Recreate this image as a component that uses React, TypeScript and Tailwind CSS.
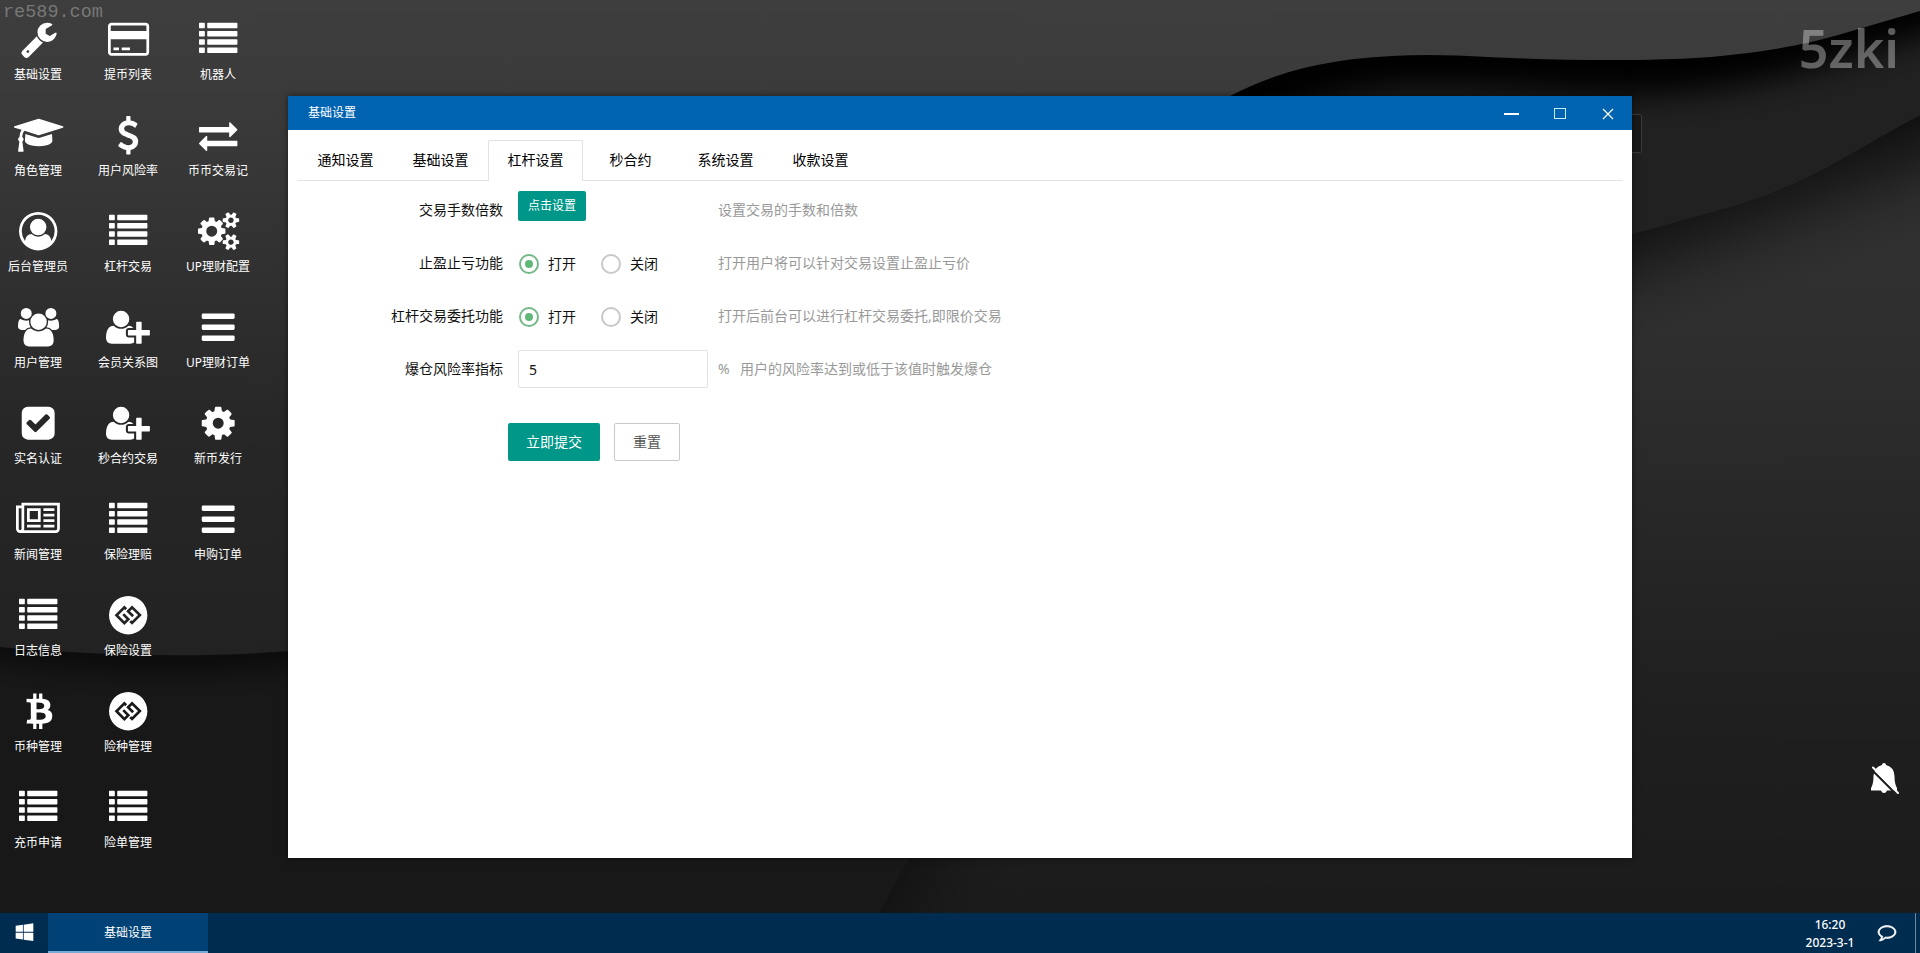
import { useState } from 'react';

type IconDef = { w: number; d: string };

const icons: Record<string, IconDef> = {
  wrench: {
    w: 1664,
    d: 'M384 1472q0-26-19-45t-45-19-45 19-19 45 19 45 45 19 45-19 19-45zm644-420l-682 682q-37 37-90 37-52 0-91-37l-106-108q-38-36-38-90 0-53 38-91l681-681q39 98 114.500 173.500t173.500 114.500zm634-435q0 39-23 106-47 134-164.500 217.500t-258.500 83.500q-185 0-316.500-131.500t-131.500-316.500 131.500-316.500 316.500-131.500q58 0 121.500 16.500t107.500 46.500q16 11 16 28t-16 28l-293 169v224l193 107q5-3 79-48.500t135.500-81 70.500-35.500q15 0 23.500 10t8.500 25z',
  },
  gradCap: {
    w: 2304,
    d: 'M1774 836l18 316q4 69-82 128t-235 93.500-323 34.500-323-34.500-235-93.500-82-128l18-316 574 181q22 7 48 7t48-7zm530-324q0 23-22 31l-1120 352q-4 1-10 1t-10-1l-652-206q-43 34-71 111.500t-34 178.500q63 36 63 109 0 69-58 107l58 433q2 14-8 25-9 11-24 11h-192q-15 0-24-11-10-11-8-25l58-433q-58-38-58-107 0-73 65-111 11-207 98-330l-333-104q-22-8-22-31t22-31l1120-352q4-1 10-1t10 1l1120 352q22 8 22 31z',
  },
  userCircle: {
    w: 1792,
    d: 'M896 0q182 0 348 71t286 191 191 286 71 348q0 181-70.500 347t-190.500 286-286 191.500-349 71.500-349-71-285.500-191.500-190.500-286-71-347.500 71-348 191-286 286-191 348-71zm619 1351q149-205 149-455 0-156-61-298t-164-245-245-164-298-61-298 61-245 164-164 245-61 298q0 250 149 455 66-327 306-327 131 128 313 128t313-128q240 0 306 327zm-235-647q0-159-112.500-271.500t-271.500-112.500-271.500 112.500-112.500 271.500 112.500 271.500 271.500 112.500 271.500-112.500 112.500-271.500z',
  },
  users: {
    w: 1920,
    d: 'M593 896q-162 5-265 128h-134q-82 0-138-40.500t-56-118.500q0-353 124-353 6 0 43.500 21t97.500 42.500 119 21.500q67 0 133-23-5 37-5 66 0 139 81 256zm1071 637q0 120-73 189.500t-194 69.500h-874q-121 0-194-69.500t-73-189.500q0-53 3.500-103.500t14-109 26.500-108.500 43-97.500 62-81 85.500-53.500 111.500-20q10 0 43 21.500t73 48 107 48 135 21.500 135-21.500 107-48 73-48 43-21.500q61 0 111.500 20t85.500 53.500 62 81 43 97.500 26.500 108.500 14 109 3.500 103.500zm-1024-1277q0 106-75 181t-181 75-181-75-75-181 75-181 181-75 181 75 75 181zm704 384q0 159-112.500 271.500t-271.500 112.500-271.500-112.500-112.500-271.500 112.500-271.500 271.500-112.500 271.500 112.500 112.500 271.500zm576 225q0 78-56 118.500t-138 40.500h-134q-103-123-265-128 81-117 81-256 0-29-5-66 66 23 133 23 59 0 119-21.500t97.500-42.500 43.500-21q124 0 124 353zm-128-609q0 106-75 181t-181 75-181-75-75-181 75-181 181-75 181 75 75 181z',
  },
  check: {
    w: 1792,
    d: 'M813 1299l614-614q19-19 19-45t-19-45l-102-102q-19-19-45-19t-45 19l-467 467-211-211q-19-19-45-19t-45 19l-102 102q-19 19-19 45t19 45l358 358q19 19 45 19t45-19zm851-883v960q0 119-84.500 203.500t-203.500 84.500h-960q-119 0-203.500-84.500t-84.500-203.500v-960q0-119 84.500-203.500t203.500-84.500h960q119 0 203.500 84.500t84.500 203.500z',
  },
  newspaper: {
    w: 2048,
    d: 'M1024 512H640v384h384zM1152 1152v128H512v-128zM1152 384v640H512V384zM1792 1152v128h-512v-128zM1792 896v128h-512V896zM1792 640v128h-512V640zM1792 384v128h-512V384zM256 1344V384H128v960q0 26 19 45t45 19 45-19 19-45zM1920 1344V256H384v1088q0 33-11 64h1483q26 0 45-19t19-45zM2048 128v1216q0 80-56 136t-136 56H192q-80 0-136-56T0 1344V256h256V128z',
  },
  list: {
    w: 1792,
    d: 'M32 128h208q32 0 32 32v192q0 32-32 32H32q-32 0-32-32V160q0-32 32-32zM32 512h208q32 0 32 32v192q0 32-32 32H32q-32 0-32-32V544q0-32 32-32zM32 896h208q32 0 32 32v192q0 32-32 32H32q-32 0-32-32V928q0-32 32-32zM32 1280h208q32 0 32 32v192q0 32-32 32H32q-32 0-32-32v-192q0-32 32-32zM416 128h1344q32 0 32 32v192q0 32-32 32H416q-32 0-32-32V160q0-32 32-32zM416 512h1344q32 0 32 32v192q0 32-32 32H416q-32 0-32-32V544q0-32 32-32zM416 896h1344q32 0 32 32v192q0 32-32 32H416q-32 0-32-32V928q0-32 32-32zM416 1280h1344q32 0 32 32v192q0 32-32 32H416q-32 0-32-32v-192q0-32 32-32z',
  },
  btc: {
    w: 1792,
    d: 'M1463 580q18 182-131 258 117 28 175 103t45 214q-7 71-32.500 125t-64.500 89-97 58.500-121.500 34.500-145.500 15v255h-154v-251q-80 0-122-1v252h-154v-255q-18 0-54-.5t-55-.5h-200l31-183h111q50 0 58-51v-402h16q-6-1-16-1v-287q-13-68-89-68h-111v-164l212 1q64 0 97-1v-252h154v247q82-2 122-2v-245h154v252q79 7 140 22.500t113 45 82.500 78 36.500 114.500zm-215 545q0-36-15-64t-37-46-57.500-30.500-65.500-18.500-74-9-69-3-64.500 1-47.500 1v338q8 0 37 .5t48 .5 53-1.500 58.500-4 57-8.500 55.500-14 47.500-21 39.500-30 24.500-40 9.500-51zm-71-476q0-33-12.500-58.500t-30.500-42-48-28-55-16.500-61.500-8-58-2.500-54 1-39.500.5v307q5 0 34.500.5t46.500 0 50-2 55-5.500 51.500-11 48.500-18.500 37-27 27-38.500 9-51z',
  },
  card: {
    w: 1920,
    d: 'M1760 128q66 0 113 47t47 113v1216q0 66-47 113t-113 47h-1600q-66 0-113-47t-47-113v-1216q0-66 47-113t113-47h1600zm-1600 128q-13 0-22.500 9.500t-9.500 22.500v224h1664v-224q0-13-9.500-22.500t-22.500-9.500h-1600zm1600 1280q13 0 22.500-9.500t9.500-22.500v-608h-1664v608q0 13 9.500 22.500t22.500 9.500h1600zm-1504-128v-128h256v128h-256zm384 0v-128h384v128h-384z',
  },
  dollar: {
    w: 1792,
    d: 'M1362 1185q0 153-99.500 263.500t-258.500 136.500v175q0 14-9 23t-23 9h-135q-13 0-22.500-9.500t-9.500-22.500v-175q-66-9-127.500-31t-101.500-44.500-74-48-46.500-37.500-17.500-18q-17-21-2-41l103-135q7-10 23-12 15-2 24 9l2 2q113 99 243 125 37 8 74 8 81 0 142.500-43t61.500-122q0-28-15-53t-33.500-42-58.500-37.500-66-32-80-32.500q-39-16-61.500-25t-61.500-26.500-62.500-31-56.500-35.500-53.500-42.500-43.500-49-35.500-58-21-66.500-8.500-78q0-138 98-242t255-134v-180q0-13 9.500-22.500t22.500-9.500h135q14 0 23 9t9 23v176q57 6 110.500 23t87 33.500 63.500 37.500 39 29 15 14q17 18 5 38l-81 146q-8 15-23 16-14 3-27-7-3-3-14.500-12t-39-26.500-58.500-32-74.500-26-85.500-11.500q-95 0-155 43t-60 111q0 26 8.500 48t29.500 41.500 39.500 33 56 31 60.500 27 70 27.500q53 20 81 31.500t76 35 75.500 42.500 62 50 53 63.500 31.500 76.500 13 94z',
  },
  userPlus: {
    w: 2048,
    d: 'M704 896q-159 0-271.500-112.500t-112.500-271.500 112.500-271.500 271.500-112.500 271.500 112.500 112.500 271.500-112.500 271.500-271.500 112.500zm960 128h352q13 0 22.500 9.500t9.500 22.500v192q0 13-9.500 22.500t-22.500 9.500h-352v352q0 13-9.500 22.500t-22.500 9.500h-192q-13 0-22.500-9.500t-9.500-22.500v-352h-352q-13 0-22.500-9.500t-9.500-22.500v-192q0-13 9.500-22.500t22.500-9.500h352v-352q0-13 9.500-22.500t22.500-9.500h192q13 0 22.500 9.500t9.500 22.500v352zm-736 224q0 52 38 90t90 38h256v238q-68 50-171 50h-874q-121 0-194-69t-73-190q0-53 3.500-103.500t14-109 26.500-108.500 43-97.500 62-81 85.500-53.500 111.500-20q19 0 39 17 79 61 154.500 91.500t164.500 30.500 164.500-30.500 154.500-91.500q20-17 39-17 132 0 217 96h-223q-52 0-90 38t-38 90v192z',
  },
  gg: {
    w: 1792,
    d: 'M717 1354l271-271-279-279-88 88 192 191-96 96-279-279 279-279 40 40 87-87-127-128-454 454zm358-8l454-454-454-454-271 271 279 279 88-88-192-191 96-96 279 279-279 279-40-40-87 88zm717-450q0 182-71 348t-191 286-286 191-348 71-348-71-286-191-191-286-71-348 71-348 191-286 286-191 348-71 348 71 286 191 191 286 71 348z',
  },
  exchange: {
    w: 1792,
    d: 'M1792 1184v192q0 13-9.500 22.500t-22.500 9.500h-1376v192q0 13-9.500 22.500t-22.500 9.500q-12 0-24-10l-319-320q-9-9-9-22 0-14 9-23l320-320q9-9 23-9 13 0 22.500 9.500t9.500 22.500v192h1376q13 0 22.500 9.500t9.500 22.500zm0-544q0 14-9 23l-320 320q-9 9-23 9-13 0-22.500-9.500t-9.500-22.500v-192h-1376q-13 0-22.500-9.500t-9.500-22.500v-192q0-13 9.500-22.500t22.500-9.500h1376v-192q0-14 9-23t23-9q12 0 24 10l319 319q9 9 9 23z',
  },
  cogs: {
    w: 1920,
    d: 'M896 896q0-106-75-181t-181-75-181 75-75 181 75 181 181 75 181-75 75-181zm768 512q0-52-38-90t-90-38-90 38-38 90q0 53 37.500 90.500t90.500 37.500 90.500-37.500 37.500-90.500zm0-1024q0-52-38-90t-90-38-90 38-38 90q0 53 37.500 90.500t90.500 37.500 90.500-37.500 37.500-90.500zm-384 421v185q0 10-7 19.500t-16 10.500l-155 24q-11 35-32 76 34 48 90 115 7 11 7 20 0 12-7 19-23 30-82.500 89.500t-78.500 59.500q-11 0-21-7l-115-90q-37 19-77 31-11 108-23 155-7 24-30 24h-186q-11 0-20-7.500t-10-17.500l-23-153q-34-10-75-31l-118 89q-7 7-20 7-11 0-21-8-144-133-144-160 0-9 7-19 10-14 41-53t47-61q-23-44-35-82l-152-24q-10-1-17-9.500t-7-19.500v-185q0-10 7-19.500t16-10.500l155-24q11-35 32-76-34-48-90-115-7-11-7-20 0-12 7-20 22-30 82-89t79-59q11 0 21 7l115 90q34-18 77-32 11-108 23-154 7-24 30-24h186q11 0 20 7.500t10 17.500l23 153q34 10 75 31l118-89q8-7 20-7 11 0 21 8 144 133 144 160 0 8-7 19-12 16-42 54t-45 60q23 48 34 82l152 23q10 2 17 10.500t7 19.500zm640 533v140q0 16-149 31-12 27-30 52 51 113 51 138 0 4-4 7-122 71-124 71-8 0-46-47t-52-68q-20 2-30 2t-30-2q-14 21-52 68t-46 47q-2 0-124-71-4-3-4-7 0-25 51-138-18-25-30-52-149-15-149-31v-140q0-16 149-31 13-29 30-52-51-113-51-138 0-4 4-7 4-2 35-20t59-34 30-16q8 0 46 46.500t52 67.500q20-2 30-2t30 2q51-71 92-112l6-2q4 0 124 70 4 3 4 7 0 25-51 138 17 23 30 52 149 15 149 31zm0-1024v140q0 16-149 31-12 27-30 52 51 113 51 138 0 4-4 7-122 71-124 71-8 0-46-47t-52-68q-20 2-30 2t-30-2q-14 21-52 68t-46 47q-2 0-124-71-4-3-4-7 0-25 51-138-18-25-30-52-149-15-149-31v-140q0-16 149-31 13-29 30-52-51-113-51-138 0-4 4-7 4-2 35-20t59-34 30-16q8 0 46 46.500t52 67.500q20-2 30-2t30 2q51-71 92-112l6-2q4 0 124 70 4 3 4 7 0 25-51 138 17 23 30 52 149 15 149 31z',
  },
  bars: {
    w: 1792,
    d: 'M192 256h1408q64 0 64 64v128q0 64-64 64H192q-64 0-64-64V320q0-64 64-64zM192 768h1408q64 0 64 64v128q0 64-64 64H192q-64 0-64-64V832q0-64 64-64zM192 1280h1408q64 0 64 64v128q0 64-64 64H192q-64 0-64-64v-128q0-64 64-64z',
  },
  cog: {
    w: 1792,
    d: 'M1152 896q0-106-75-181t-181-75-181 75-75 181 75 181 181 75 181-75 75-181zm512-109v222q0 12-8 23t-20 13l-185 28q-19 54-39 91 35 50 107 138 10 12 10 25t-9 23q-27 37-99 108t-94 71q-12 0-26-9l-138-108q-44 23-91 38-16 136-29 186-7 28-36 28h-222q-14 0-24.500-8.500t-11.500-21.500l-28-184q-49-16-90-37l-141 107q-10 9-25 9-14 0-25-11-126-114-165-168-7-10-7-23 0-12 8-23 15-21 51-66.500t54-70.500q-27-50-41-99l-183-27q-13-2-21-12.500t-8-23.500v-222q0-12 8-23t19-13l186-28q14-46 39-92-40-57-107-138-10-12-10-24 0-10 9-23 26-36 98.500-107.500t94.500-71.500q13 0 26 10l138 107q44-23 91-38 16-136 29-186 7-28 36-28h222q14 0 24.500 8.500t11.500 21.500l28 184q49 16 90 37l142-107q9-9 24-9 13 0 25 10 129 119 165 170 7 8 7 22 0 12-8 23-15 21-51 66.500t-54 70.500q26 50 41 98l183 28q13 2 21 12.500t8 23.500z',
  },
  windows: {
    w: 1792,
    d: 'M746 1006v651l-682-94v-557h682zm0-743v659h-682v-565zm982 743v786l-907-125v-661h907zm0-878v794h-907v-669z',
  },
  comment: {
    w: 1792,
    d: 'M896 384q-204 0-381.500 69.500t-282 187.500-104.500 255q0 112 71.500 213.500t201.500 175.500l87 50-27 96q-24 91-70 172 152-63 275-171l43-38 57 6q69 8 130 8 204 0 381.500-69.500t282-187.500 104.500-255-104.500-255-282-187.500-381.500-69.500zm896 512q0 174-120 321.500t-326 233-450 85.500q-70 0-145-8-198 175-460 242-49 14-114 22h-5q-15 0-27-10.500t-16-27.500v-1q-3-4-.5-12t2-10 4.500-9.500l6-9 7-8.500 8-9q7-8 31-34.500t34.500-38 31-39.500 32.500-51 27-59 26-76q-157-89-247.500-220t-90.500-281q0-174 120-321.500t326-233 450-85.500 450 85.500 326 233 120 321.500z',
  },
};

function Icon({ name, size }: { name: string; size: number }) {
  const icon = icons[name];
  return (
    <svg
      viewBox={`0 0 ${icon.w} 1792`}
      width={(icon.w / 1792) * size}
      height={size}
      fill="currentColor"
      fillRule="evenodd"
      className="ml-[0.8px] shrink-0 overflow-visible"
    >
      <path d={icon.d} />
    </svg>
  );
}

const columns = [
  [
    { icon: 'wrench', label: '基础设置' },
    { icon: 'gradCap', label: '角色管理' },
    { icon: 'userCircle', label: '后台管理员' },
    { icon: 'users', label: '用户管理' },
    { icon: 'check', label: '实名认证' },
    { icon: 'newspaper', label: '新闻管理' },
    { icon: 'list', label: '日志信息' },
    { icon: 'btc', label: '币种管理' },
    { icon: 'list', label: '充币申请' },
  ],
  [
    { icon: 'card', label: '提币列表' },
    { icon: 'dollar', label: '用户风险率' },
    { icon: 'list', label: '杠杆交易' },
    { icon: 'userPlus', label: '会员关系图' },
    { icon: 'userPlus', label: '秒合约交易' },
    { icon: 'list', label: '保险理赔' },
    { icon: 'gg', label: '保险设置' },
    { icon: 'gg', label: '险种管理' },
    { icon: 'list', label: '险单管理' },
  ],
  [
    { icon: 'list', label: '机器人' },
    { icon: 'exchange', label: '币币交易记' },
    { icon: 'cogs', label: 'UP理财配置' },
    { icon: 'bars', label: 'UP理财订单' },
    { icon: 'cog', label: '新币发行' },
    { icon: 'bars', label: '申购订单' },
  ],
];

const tabs = ['通知设置', '基础设置', '杠杆设置', '秒合约', '系统设置', '收款设置'];

function Wallpaper() {
  return (
    <svg className="absolute inset-0" width="1920" height="953" viewBox="0 0 1920 953">
      <defs>
        <linearGradient id="sheet" x1="0" y1="0" x2="0" y2="1">
          <stop offset="0" stopColor="#3e3e3e" />
          <stop offset="0.2" stopColor="#393939" />
          <stop offset="0.65" stopColor="#272727" />
          <stop offset="1" stopColor="#222222" />
        </linearGradient>
        <linearGradient id="corner" gradientUnits="userSpaceOnUse" x1="0" y1="120" x2="0" y2="913">
          <stop offset="0" stopColor="#333333" />
          <stop offset="0.3" stopColor="#2e2e2e" />
          <stop offset="0.75" stopColor="#1f1f1f" />
          <stop offset="1" stopColor="#1b1b1b" />
        </linearGradient>
        {/* dark along the fold, clearing towards the lower right */}
        <linearGradient id="fold" gradientUnits="userSpaceOnUse" x1="1650" y1="215" x2="1688" y2="322">
          <stop offset="0" stopColor="#121212" stopOpacity="1" />
          <stop offset="0.3" stopColor="#161616" stopOpacity="0.75" />
          <stop offset="0.65" stopColor="#1c1c1c" stopOpacity="0.3" />
          <stop offset="1" stopColor="#222222" stopOpacity="0" />
        </linearGradient>
        <linearGradient id="foldLow" gradientUnits="userSpaceOnUse" x1="880" y1="885" x2="990" y2="945">
          <stop offset="0" stopColor="#121212" stopOpacity="1" />
          <stop offset="1" stopColor="#1c1c1c" stopOpacity="0" />
        </linearGradient>
        <filter id="soft" filterUnits="userSpaceOnUse" x="-100" y="-100" width="2120" height="1153">
          <feGaussianBlur stdDeviation="16" />
        </filter>
        <clipPath id="cornerClip">
          <path d="M1920 115C1895 128 1870 143 1845 157C1790 188 1750 202 1711 212L1632 234C1400 320 1050 560 909 858L857 953H1920Z" />
        </clipPath>
      </defs>
      <rect width="1920" height="953" fill="#181818" />
      <rect x="1100" width="820" height="500" fill="#212121" />
      {/* shadows cast by the upper sheet */}
      <path
        d="M1180 120C1270 80 1350 55 1430 55C1520 56 1600 66 1660 62C1750 58 1820 32 1950 -6"
        stroke="#000"
        strokeWidth="64"
        fill="none"
        filter="url(#soft)"
      />
      <path d="M-60 634C60 656 200 664 340 642" stroke="#000" strokeWidth="20" fill="none" filter="url(#soft)" />
      <path
        d="M0 0H1920V11L1845 33C1800 46 1765 52 1711 57C1640 62 1555 60 1488 57C1440 54 1400 54 1354 59C1300 66 1265 78 1230 96L1100 200L500 620L288 651C200 658 100 656 0 647Z"
        fill="url(#sheet)"
      />
      <g clipPath="url(#cornerClip)">
        <rect x="800" y="100" width="1120" height="853" fill="url(#corner)" />
        <rect x="1600" y="100" width="320" height="300" fill="url(#fold)" />
        <rect x="800" y="840" width="400" height="113" fill="url(#foldLow)" />
      </g>
    </svg>
  );
}

function Desktop() {
  return (
    <div className="relative flex items-start gap-[14px] pt-5">
      {columns.map((items, i) => (
        <div key={i} className="flex w-[76px] flex-col">
          {items.map((item) => (
            <div key={item.label} className="flex h-24 cursor-pointer flex-col items-center text-white">
              <Icon name={item.icon} size={38.4} />
              <span className="mt-[7px] text-xs leading-5 whitespace-nowrap">{item.label}</span>
            </div>
          ))}
        </div>
      ))}
    </div>
  );
}

function Radio({ label, checked, onSelect }: { label: string; checked: boolean; onSelect: () => void }) {
  return (
    <button onClick={onSelect} className="flex w-[82px] items-center gap-[9px]">
      <span
        className={`flex size-5 items-center justify-center rounded-full border-2 ${
          checked ? 'border-[#74b98a]' : 'border-[#c8c8c8]'
        }`}
      >
        {checked && <span className="size-2 rounded-full bg-[#5fb878]"></span>}
      </span>
      {label}
    </button>
  );
}

function RadioRow({ label, hint }: { label: string; hint: string }) {
  const [open, setOpen] = useState(true);

  return (
    <div className="flex h-[38px] items-center">
      <label className="mr-4 w-[191px] text-right">{label}</label>
      <div className="flex w-[199px] pt-px">
        <Radio label="打开" checked={open} onSelect={() => setOpen(true)} />
        <Radio label="关闭" checked={!open} onSelect={() => setOpen(false)} />
      </div>
      <span className="text-[#999]">{hint}</span>
    </div>
  );
}

function SettingsWindow() {
  const [activeTab, setActiveTab] = useState('杠杆设置');

  return (
    <div className="absolute top-24 left-72 flex h-[762px] w-[1344px] flex-col bg-white shadow-[0_0_6px_rgba(0,0,0,0.5)]">
      {/* Title Bar */}
      <div className="flex h-[34px] shrink-0 items-center justify-between bg-[#0063b1] pr-[18px] pl-5 text-white">
        <span className="text-xs">基础设置</span>
        <div className="flex items-center pt-px">
          <span className="h-0.5 w-[15px] bg-white"></span>
          <span className="ml-[35px] h-[11px] w-3 border border-[#c5f0ff]"></span>
          <svg className="ml-9" width="12" height="12" viewBox="0 0 12 12" stroke="#fff" strokeWidth="1.2">
            <path d="M1 1L11 11M11 1L1 11" />
          </svg>
        </div>
      </div>

      {/* Tabs */}
      <div className="mx-[9px] mt-2.5 flex h-[41px] shrink-0 border-b border-[#e2e2e2] pl-px text-sm text-black">
        {tabs.map((tab) => (
          <button
            key={tab}
            onClick={() => setActiveTab(tab)}
            className={`h-[41px] w-[95px] border border-b-0 pb-0.5 ${
              tab === activeTab ? 'rounded-t-xs border-[#e2e2e2] bg-white' : 'border-transparent'
            }`}
          >
            {tab}
          </button>
        ))}
      </div>

      {/* Form */}
      <div className="flex flex-col gap-[15px] pt-2.5 pl-6 text-sm text-[#111]">
        <div className="flex h-[38px] items-center">
          <label className="mr-[15px] w-[191px] text-right">交易手数倍数</label>
          <div className="h-full w-[200px]">
            <button className="h-[30px] w-[68px] rounded-xs bg-[#009688] text-xs text-white">点击设置</button>
          </div>
          <span className="text-[#999]">设置交易的手数和倍数</span>
        </div>
        <RadioRow label="止盈止亏功能" hint="打开用户将可以针对交易设置止盈止亏价" />
        <RadioRow label="杠杆交易委托功能" hint="打开后前台可以进行杠杆交易委托,即限价交易" />
        <div className="flex h-[38px] items-center">
          <label className="mr-[15px] w-[191px] text-right">爆仓风险率指标</label>
          <input
            defaultValue="5"
            className="h-[38px] w-[190px] rounded-xs border border-[#e2e2e2] pl-2.5 outline-none"
          />
          <span className="ml-2.5 w-[22px] text-[#999]">%</span>
          <span className="text-[#999]">用户的风险率达到或低于该值时触发爆仓</span>
        </div>
        <div className="mt-5 ml-[196px] flex gap-3.5">
          <button className="h-[38px] w-[92px] rounded-xs bg-[#009688] text-white">立即提交</button>
          <button className="h-[38px] w-[66px] rounded-xs border border-[#c9c9c9] bg-white text-[#555]">重置</button>
        </div>
      </div>
    </div>
  );
}

function Taskbar() {
  return (
    <div className="absolute inset-x-0 bottom-0 flex h-10 bg-[#002c4f] text-xs text-white">
      <button className="flex w-12 items-center justify-center pb-[3px]">
        <Icon name="windows" size={19} />
      </button>
      <button className="w-40 border-b-2 border-[#76a9d3] bg-[#004275] pt-0.5">基础设置</button>
      <div className="ml-auto flex items-center">
        <div className="flex w-[100px] flex-col items-center pt-0.5 leading-[18px] font-medium">
          <span>16:20</span>
          <span>2023-3-1</span>
        </div>
        <div className="flex w-[35px] justify-end pr-[19px] pb-[3px]">
          <svg
            className="shrink-0 overflow-visible"
            width="18"
            height="18"
            viewBox="0 0 1792 1792"
            fill="#fff"
            stroke="#fff"
            strokeWidth="70"
          >
            <path d={icons.comment.d} />
          </svg>
        </div>
        <div className="mr-1 h-10 w-px bg-[#6d879b]"></div>
      </div>
    </div>
  );
}

export default function App() {
  return (
    <div className="relative h-[953px] w-[1920px] overflow-hidden bg-[#181818] font-['Noto_Sans','Noto_Sans_CJK_SC',sans-serif]">
      <Wallpaper />
      <Desktop />

      {/* Watermarks */}
      <div className="absolute top-px left-[3px] font-['Liberation_Mono',monospace] text-[18.5px] leading-6 text-[#777]">
        re589.com
      </div>
      <div className="absolute top-[13px] right-[21px] text-[52px] leading-[70px] font-semibold text-white/35">5zki</div>

      <div className="absolute top-[114px] left-[1600px] h-[39px] w-[42px] rounded-xs border border-[#3a3a3a] bg-[#191919]"></div>
      <SettingsWindow />

      {/* Muted bell */}
      <svg className="absolute top-[762px] left-[1869px]" width="32" height="34" viewBox="0 0 32 34">
        <path
          d="M13 3Q13 1 15 1T17 3Q25 5 25.500 14Q25.500 22 28 26V28.500H18Q17 31 15 31T12 28.500H2V26Q4.500 22 4.500 14Q5 5 13 3Z"
          fill="#fff"
        />
        <path d="M2.500 7.500L27 32" stroke="#1e1e1e" strokeWidth="2.200" />
        <path d="M4 5.500L29 31" stroke="#fff" strokeWidth="2" strokeLinecap="round" />
      </svg>

      <Taskbar />
    </div>
  );
}
